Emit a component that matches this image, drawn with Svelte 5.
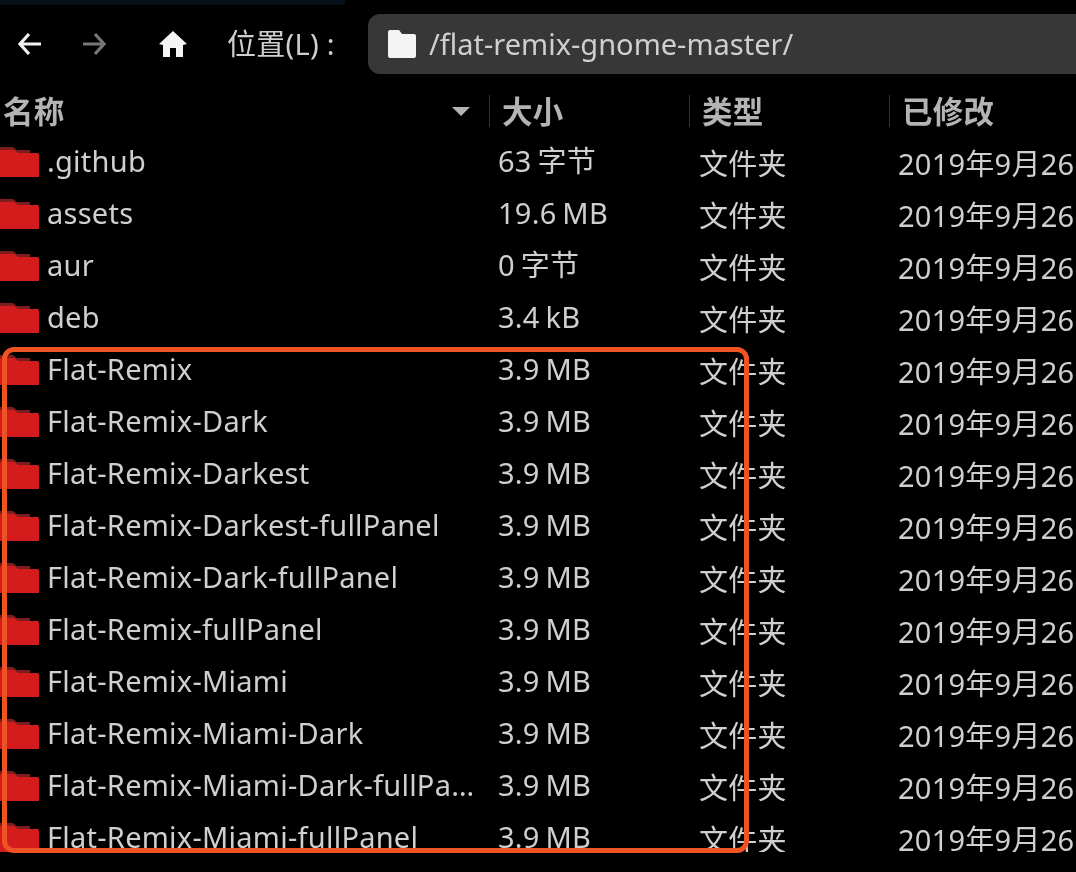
<script>
  const rows = [
    { name: '.github', size: '63 字节' },
    { name: 'assets', size: '19.6 MB' },
    { name: 'aur', size: '0 字节' },
    { name: 'deb', size: '3.4 kB' },
    { name: 'Flat-Remix', size: '3.9 MB' },
    { name: 'Flat-Remix-Dark', size: '3.9 MB' },
    { name: 'Flat-Remix-Darkest', size: '3.9 MB' },
    { name: 'Flat-Remix-Darkest-fullPanel', size: '3.9 MB' },
    { name: 'Flat-Remix-Dark-fullPanel', size: '3.9 MB' },
    { name: 'Flat-Remix-fullPanel', size: '3.9 MB' },
    { name: 'Flat-Remix-Miami', size: '3.9 MB' },
    { name: 'Flat-Remix-Miami-Dark', size: '3.9 MB' },
    { name: 'Flat-Remix-Miami-Dark-fullPanel', size: '3.9 MB' },
    { name: 'Flat-Remix-Miami-fullPanel', size: '3.9 MB' }
  ];
</script>

<div class="window">
  <div class="topstrip"></div>

  <div class="toolbar">
    <svg class="nav" viewBox="0 0 26 26" width="26" height="26">
      <path d="M12 3 L3 13 L12 23 M3 13 H24" fill="none" stroke="#f2f2f2" stroke-width="3.2" />
    </svg>
    <svg class="nav forward" viewBox="0 0 26 26" width="26" height="26">
      <path d="M14 3 L23 13 L14 23 M23 13 H2" fill="none" stroke="#777" stroke-width="3.2" />
    </svg>
    <svg class="home" viewBox="0 0 28 28" width="28" height="28">
      <path d="M14 1 L28 14 L24 15 V27 H17 V18 H11 V27 H4 V15 L0 14 Z" fill="#f4f4f4" />
    </svg>
    <span class="location">位置(L) :</span>
    <div class="pathbar">
      <svg viewBox="0 0 28 28" width="28" height="28">
        <path d="M0 2 Q0 0 2 0 H11 L14 4 H26 Q28 4 28 6 V26 Q28 28 26 28 H2 Q0 28 0 26 Z" fill="#f4f4f4" />
      </svg>
      <span class="path">/flat-remix-gnome-master/</span>
    </div>
  </div>

  <div class="header">
    <div class="col first">名称<span class="sort"></span></div>
    <div class="col">大小</div>
    <div class="col">类型</div>
    <div class="col">已修改</div>
  </div>

  <div class="list">
    {#each rows as row}
      <div class="row">
        <div class="name">
          <svg class="folder" viewBox="0 0 40 30" width="40" height="30">
            <path d="M0 0 H13 L17 3 H30 V6 H0 Z" fill="#7c1c1c" />
            <path d="M0 3 H14 L18 6 H37 Q39 6 39 8 V30 H0 Z" fill="#d41c1c" />
          </svg>
          <span class="label">{row.name}</span>
        </div>
        <div class="cell size">{row.size}</div>
        <div class="cell kind">文件夹</div>
        <div class="cell date">2019年9月26日</div>
      </div>
    {/each}
  </div>

  <div class="highlight"></div>
</div>

<style>
  :global(body) {
    background: #000;
  }

  .window {
    position: relative;
    width: 1076px;
    height: 872px;
    overflow: hidden;
    background: #000;
    color: #cfcfcf;
    font-family: "Noto Sans", "Noto Sans CJK SC", sans-serif;
    font-size: 29px;
    letter-spacing: 0.25px;
    line-height: 36px;
  }

  .topstrip {
    width: 345px;
    height: 5px;
    background: #06101a;
  }

  .toolbar {
    display: flex;
    align-items: center;
    height: 60px;
    margin-top: 9px;
    filter: blur(0.5px);
  }

  .nav {
    margin-left: 17px;
  }

  .forward {
    margin-left: 38px;
  }

  .home {
    margin-left: 52px;
  }

  .location {
    margin-left: 40px;
    width: 141px;
    white-space: nowrap;
  }

  .pathbar {
    flex: 1;
    display: flex;
    align-items: center;
    gap: 13px;
    align-self: stretch;
    padding-left: 20px;
    background: #373737;
    border-radius: 12px 0 0 12px;
  }

  .path {
    letter-spacing: 0;
  }

  .header {
    display: grid;
    grid-template-columns: 489px 200px 200px 1fr;
    grid-template-rows: 32px;
    margin-top: 21px;
    margin-bottom: 9px;
    font-size: 30.5px;
    font-weight: 700;
    color: #b4b4b4;
    filter: blur(0.5px);
  }

  .col {
    display: flex;
    align-items: center;
    padding-left: 12px;
    border-left: 1px solid #333;
  }

  .col.first {
    border-left: 0;
    padding-left: 3px;
    justify-content: space-between;
    padding-right: 19px;
  }

  .sort {
    width: 0;
    height: 0;
    border-left: 9px solid transparent;
    border-right: 9px solid transparent;
    border-top: 9px solid #b4b4b4;
  }

  .list {
    height: 716px;
    overflow: hidden;
    filter: blur(0.5px);
  }

  .row {
    display: grid;
    grid-template-columns: 498px 201px 199px 1fr;
    grid-template-rows: 52px;
    align-items: center;
    white-space: nowrap;
  }

  .name {
    display: flex;
    align-items: center;
    gap: 7px;
    padding-right: 18px;
    min-width: 0;
  }

  .folder {
    flex: none;
  }

  .label {
    padding-bottom: 2px;
    overflow: hidden;
    text-overflow: ellipsis;
  }

  .cell {
    overflow: hidden;
  }

  .size {
    padding-bottom: 2px;
    word-spacing: -2px;
  }

  .kind,
  .date {
    padding-top: 3px;
  }

  .highlight {
    position: absolute;
    left: 2px;
    top: 347px;
    width: 747px;
    height: 506px;
    box-sizing: border-box;
    border: 5px solid #f05323;
    border-radius: 12px;
  }
</style>
